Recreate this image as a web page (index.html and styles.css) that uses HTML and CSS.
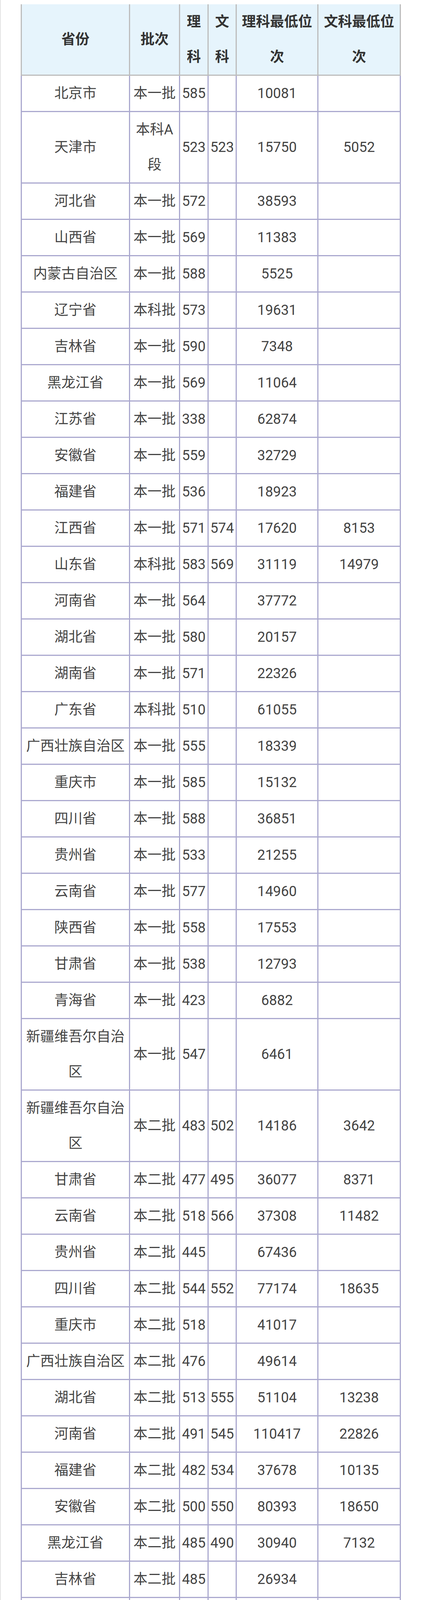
FILE: index.html
```html
<!DOCTYPE html>
<html lang="zh-CN">
<head>
<meta charset="utf-8">
<title>各省录取分数线</title>
<link rel="stylesheet" href="styles.css">
</head>
<body>
<div class="page">
<table class="scores">
<colgroup>
<col class="c-prov"><col class="c-batch"><col class="c-sci"><col class="c-art"><col class="c-rank"><col class="c-rank2">
</colgroup>
<thead>
<tr><th>省份</th><th>批次</th><th>理科</th><th>文科</th><th>理科最低位次</th><th>文科最低位次</th></tr>
</thead>
<tbody>
<tr><td>北京市</td><td>本一批</td><td>585</td><td></td><td>10081</td><td></td></tr>
<tr><td>天津市</td><td>本科A段</td><td>523</td><td>523</td><td>15750</td><td>5052</td></tr>
<tr><td>河北省</td><td>本一批</td><td>572</td><td></td><td>38593</td><td></td></tr>
<tr><td>山西省</td><td>本一批</td><td>569</td><td></td><td>11383</td><td></td></tr>
<tr><td>内蒙古自治区</td><td>本一批</td><td>588</td><td></td><td>5525</td><td></td></tr>
<tr><td>辽宁省</td><td>本科批</td><td>573</td><td></td><td>19631</td><td></td></tr>
<tr><td>吉林省</td><td>本一批</td><td>590</td><td></td><td>7348</td><td></td></tr>
<tr><td>黑龙江省</td><td>本一批</td><td>569</td><td></td><td>11064</td><td></td></tr>
<tr><td>江苏省</td><td>本一批</td><td>338</td><td></td><td>62874</td><td></td></tr>
<tr><td>安徽省</td><td>本一批</td><td>559</td><td></td><td>32729</td><td></td></tr>
<tr><td>福建省</td><td>本一批</td><td>536</td><td></td><td>18923</td><td></td></tr>
<tr><td>江西省</td><td>本一批</td><td>571</td><td>574</td><td>17620</td><td>8153</td></tr>
<tr><td>山东省</td><td>本科批</td><td>583</td><td>569</td><td>31119</td><td>14979</td></tr>
<tr><td>河南省</td><td>本一批</td><td>564</td><td></td><td>37772</td><td></td></tr>
<tr><td>湖北省</td><td>本一批</td><td>580</td><td></td><td>20157</td><td></td></tr>
<tr><td>湖南省</td><td>本一批</td><td>571</td><td></td><td>22326</td><td></td></tr>
<tr><td>广东省</td><td>本科批</td><td>510</td><td></td><td>61055</td><td></td></tr>
<tr><td>广西壮族自治区</td><td>本一批</td><td>555</td><td></td><td>18339</td><td></td></tr>
<tr><td>重庆市</td><td>本一批</td><td>585</td><td></td><td>15132</td><td></td></tr>
<tr><td>四川省</td><td>本一批</td><td>588</td><td></td><td>36851</td><td></td></tr>
<tr><td>贵州省</td><td>本一批</td><td>533</td><td></td><td>21255</td><td></td></tr>
<tr><td>云南省</td><td>本一批</td><td>577</td><td></td><td>14960</td><td></td></tr>
<tr><td>陕西省</td><td>本一批</td><td>558</td><td></td><td>17553</td><td></td></tr>
<tr><td>甘肃省</td><td>本一批</td><td>538</td><td></td><td>12793</td><td></td></tr>
<tr><td>青海省</td><td>本一批</td><td>423</td><td></td><td>6882</td><td></td></tr>
<tr><td>新疆维吾尔自治区</td><td>本一批</td><td>547</td><td></td><td>6461</td><td></td></tr>
<tr><td>新疆维吾尔自治区</td><td>本二批</td><td>483</td><td>502</td><td>14186</td><td>3642</td></tr>
<tr><td>甘肃省</td><td>本二批</td><td>477</td><td>495</td><td>36077</td><td>8371</td></tr>
<tr><td>云南省</td><td>本二批</td><td>518</td><td>566</td><td>37308</td><td>11482</td></tr>
<tr><td>贵州省</td><td>本二批</td><td>445</td><td></td><td>67436</td><td></td></tr>
<tr><td>四川省</td><td>本二批</td><td>544</td><td>552</td><td>77174</td><td>18635</td></tr>
<tr><td>重庆市</td><td>本二批</td><td>518</td><td></td><td>41017</td><td></td></tr>
<tr><td>广西壮族自治区</td><td>本二批</td><td>476</td><td></td><td>49614</td><td></td></tr>
<tr><td>湖北省</td><td>本二批</td><td>513</td><td>555</td><td>51104</td><td>13238</td></tr>
<tr><td>河南省</td><td>本二批</td><td>491</td><td>545</td><td>110417</td><td>22826</td></tr>
<tr><td>福建省</td><td>本二批</td><td>482</td><td>534</td><td>37678</td><td>10135</td></tr>
<tr><td>安徽省</td><td>本二批</td><td>500</td><td>550</td><td>80393</td><td>18650</td></tr>
<tr><td>黑龙江省</td><td>本二批</td><td>485</td><td>490</td><td>30940</td><td>7132</td></tr>
<tr><td>吉林省</td><td>本二批</td><td>485</td><td></td><td>26934</td><td></td></tr>
<tr><td>内蒙古自治区</td><td>本二批</td><td>482</td><td>504</td><td>23792</td><td>6698</td></tr>
<tr><td>山西省</td><td>本二批</td><td>508</td><td>539</td><td>35445</td><td>7010</td></tr>
<tr><td>河北省</td><td>本二批</td><td>510</td><td>560</td><td>81994</td><td>17238</td></tr>
<tr><td>北京市</td><td>本二批</td><td>539</td><td></td><td>16095</td><td></td></tr>
</tbody>
</table>
</div>
</body>
</html>
```

FILE: styles.css
```css
html, body {
  margin: 0;
  padding: 0;
  background: #ffffff;
}

.page {
  box-sizing: border-box;
  min-height: 4501px;
  border-left: 2px solid #e4e4e4;
  padding: 11px 0 0 51px;
  font-family: Roboto, "Noto Sans CJK SC", sans-serif;
  font-size: 36px;
  color: #444444;
}

.scores {
  width: 973px;
  border-collapse: collapse;
  table-layout: fixed;
}

.c-prov { width: 277px; }
.c-batch { width: 128px; }
.c-sci { width: 73px; }
.c-art { width: 72px; }
.c-rank { width: 209px; }
.c-rank2 { width: 211px; }

.scores th,
.scores td {
  padding: 0 3px;
  line-height: 90px;
  text-align: center;
  vertical-align: middle;
  word-break: break-all;
}

.scores th {
  background: #e6f4fc;
  color: #333333;
  font-weight: bold;
  border: 3px solid #bdbdbd;
  border-top: none;
}

.scores td {
  border: 3px solid #aba9cf;
}
```
